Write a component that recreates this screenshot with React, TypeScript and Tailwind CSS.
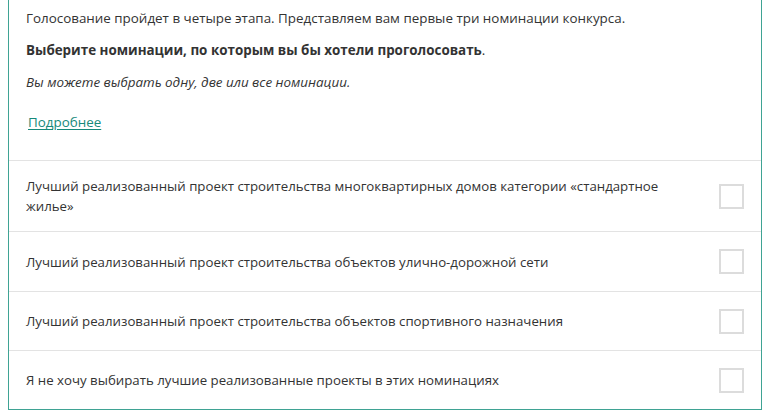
import React from "react";

const rows = [
  "Лучший реализованный проект строительства многоквартирных домов категории «стандартное жилье»",
  "Лучший реализованный проект строительства объектов улично-дорожной сети",
  "Лучший реализованный проект строительства объектов спортивного назначения",
  "Я не хочу выбирать лучшие реализованные проекты в этих номинациях",
];

export default function App() {
  return (
    <div
      className="w-[770px] h-[415px] bg-white overflow-hidden"
      style={{ fontFamily: '"Open Sans", "Liberation Sans", sans-serif' }}
    >
      <div className="mx-2 border-x border-b border-[#3fa394] leading-[20px] text-[#333333]">
        <div className="pl-[17px] pr-4 pt-2 pb-[28px] text-[13.4px]">
          <p>Голосование пройдет в четыре этапа. Представляем вам первые три номинации конкурса.</p>
          <p className="mt-3">
            <span className="font-bold">Выберите номинации, по которым вы бы хотели проголосовать</span>.
          </p>
          <p className="mt-3 italic">Вы можете выбрать одну, две или все номинации.</p>
          <p className="mt-5 pl-[2px]">
            <a href="#" className="text-[#16897a] underline underline-offset-2">
              Подробнее
            </a>
          </p>
        </div>
        {rows.map((t, i) => (
          <div
            key={i}
            className={`flex items-center justify-between border-t border-[#e3e3e3] pl-[17px] pr-[17px] text-[13.25px] ${
              i === 0 ? "h-[71px]" : i === 1 ? "h-[60px]" : "h-[59px]"
            }`}
          >
            <span className="max-w-[660px]">{t}</span>
            <span className="w-[25px] h-[25px] border-2 border-[#dcdcdc] shrink-0 bg-white" />
          </div>
        ))}
      </div>
    </div>
  );
}
